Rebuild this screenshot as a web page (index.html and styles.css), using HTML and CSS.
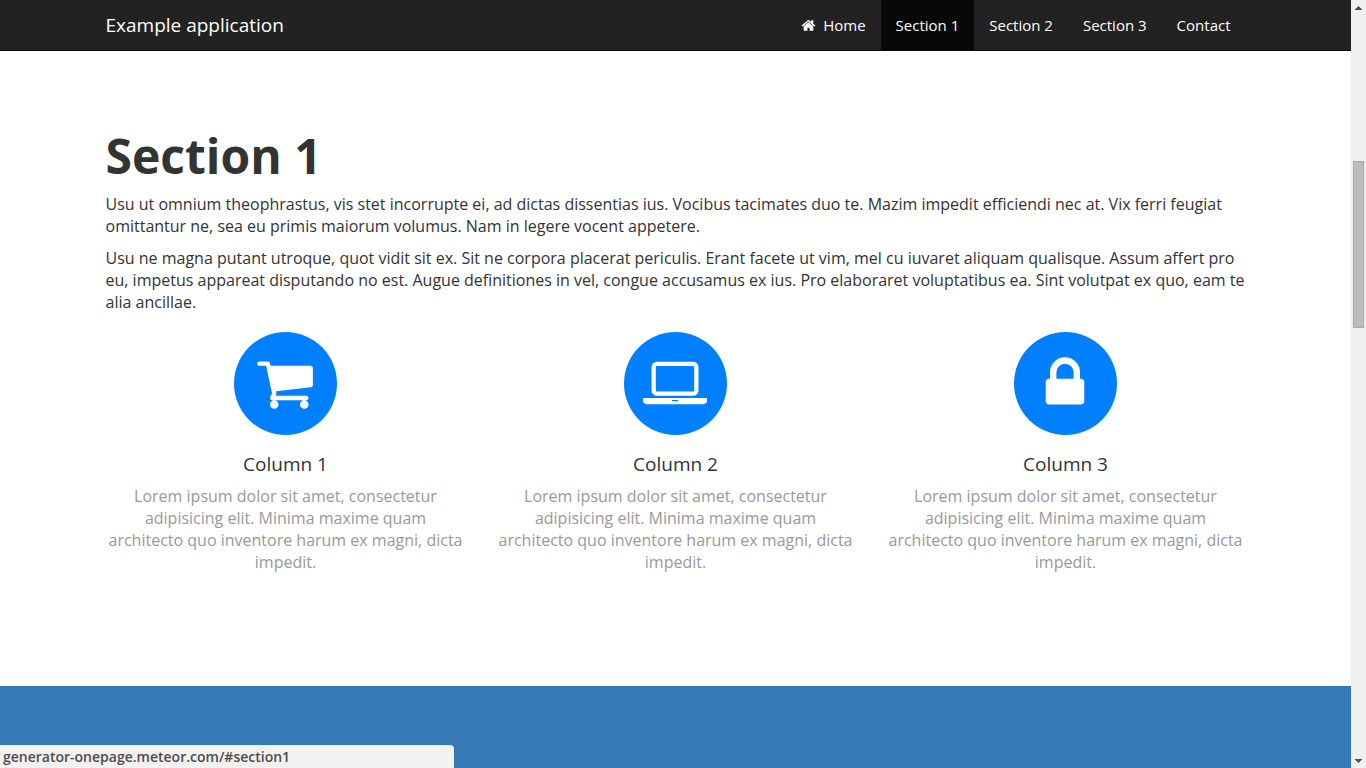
FILE: index.html
```html
<!DOCTYPE html>
<html lang="en">
<head>
<meta charset="utf-8">
<title>Example application</title>
<link rel="stylesheet" href="styles.css">
</head>
<body>
<div class="window">
  <div class="page">
    <header class="navbar">
      <div class="container navbar-inner">
        <a class="brand" href="#home">Example application</a>
        <nav class="nav">
          <a class="nav-link" href="#home"><svg class="nav-icon" viewBox="0 0 1792 1792" aria-hidden="true"><path d="M1472 992v480q0 26-19 45t-45 19h-384v-384h-256v384h-384q-26 0-45-19t-19-45v-480q0-1 .5-3t.5-3l575-474 575 474q1 2 1 6zm223-69l-62 74q-8 9-21 11h-3q-13 0-21-7l-692-577-692 577q-12 8-24 7-13-2-21-11l-62-74q-8-10-7-23.5t11-21.5l719-599q32-26 76-26t76 26l244 204v-195q0-14 9-23t23-9h192q14 0 23 9t9 23v408l219 182q10 8 11 21.5t-7 23.5z"/></svg>Home</a>
          <a class="nav-link active" href="#section1">Section 1</a>
          <a class="nav-link" href="#section2">Section 2</a>
          <a class="nav-link" href="#section3">Section 3</a>
          <a class="nav-link" href="#contact">Contact</a>
        </nav>
      </div>
    </header>
    <main class="main">
      <section class="section" id="section1">
        <div class="container">
          <h1 class="title">Section 1</h1>
          <p class="text">Usu ut omnium theophrastus, vis stet incorrupte ei, ad dictas dissentias ius. Vocibus tacimates duo te. Mazim impedit efficiendi nec at. Vix ferri feugiat omittantur ne, sea eu primis maiorum volumus. Nam in legere vocent appetere.</p>
          <p class="text">Usu ne magna putant utroque, quot vidit sit ex. Sit ne corpora placerat periculis. Erant facete ut vim, mel cu iuvaret aliquam qualisque. Assum affert pro eu, impetus appareat disputando no est. Augue definitiones in vel, congue accusamus ex ius. Pro elaboraret voluptatibus ea. Sint volutpat ex quo, eam te alia ancillae.</p>
          <div class="columns">
            <article class="column">
              <div class="badge"><svg class="badge-icon" viewBox="0 0 1792 1792" aria-hidden="true"><path d="M704 1536q0 52-38 90t-90 38-90-38-38-90 38-90 90-38 90 38 38 90zm896 0q0 52-38 90t-90 38-90-38-38-90 38-90 90-38 90 38 38 90zm128-1088v512q0 24-16.5 42.5t-40.5 21.5l-1044 122q13 60 13 70 0 16-24 64h920q26 0 45 19t19 45-19 45-45 19h-1024q-26 0-45-19t-19-45q0-11 8-31.5t16-36 21.5-40 15.500-29.5l-177-823h-204q-26 0-45-19t-19-45 19-45 45-19h256q16 0 28.500 6.500t19.500 15.500 13 24.500 8 26 5.500 29.500 4.500 26h1201q26 0 45 19t19 45z"/></svg></div>
              <h4 class="column-title">Column 1</h4>
              <p class="column-text">Lorem ipsum dolor sit amet, consectetur adipisicing elit. Minima maxime quam architecto quo inventore harum ex magni, dicta impedit.</p>
            </article>
            <article class="column">
              <div class="badge"><svg class="badge-icon wide" viewBox="0 0 1920 1792" aria-hidden="true"><path d="M416 1280q-66 0-113-47t-47-113v-704q0-66 47-113t113-47h1088q66 0 113 47t47 113v704q0 66-47 113t-113 47h-1088zm-32-864v704q0 13 9.500 22.500t22.500 9.500h1088q13 0 22.500-9.500t9.500-22.500v-704q0-13-9.500-22.500t-22.500-9.500h-1088q-13 0-22.500 9.500t-9.500 22.500zm1376 928h160v96q0 40-47 68t-113 28h-1600q-66 0-113-28t-47-68v-96h1760zm-720 96q16 0 16-16t-16-16h-160q-16 0-16 16t16 16h160z"/></svg></div>
              <h4 class="column-title">Column 2</h4>
              <p class="column-text">Lorem ipsum dolor sit amet, consectetur adipisicing elit. Minima maxime quam architecto quo inventore harum ex magni, dicta impedit.</p>
            </article>
            <article class="column">
              <div class="badge"><svg class="badge-icon" viewBox="0 0 1792 1792" aria-hidden="true"><path d="M640 768h512v-192q0-106-75-181t-181-75-181 75-75 181v192zm832 96v576q0 40-28 68t-68 28h-960q-40 0-68-28t-28-68v-576q0-40 28-68t68-28h32v-192q0-184 132-316t316-132 316 132 132 316v192h32q40 0 68 28t28 68z"/></svg></div>
              <h4 class="column-title">Column 3</h4>
              <p class="column-text">Lorem ipsum dolor sit amet, consectetur adipisicing elit. Minima maxime quam architecto quo inventore harum ex magni, dicta impedit.</p>
            </article>
          </div>
        </div>
      </section>
      <section class="section-blue" id="section2"></section>
    </main>
  </div>
  <div class="scrollbar" aria-hidden="true">
    <svg class="arrow" viewBox="0 0 7 4"><path d="M3 0h1v1h1v1h1v1h1v1H0V3h1V2h1V1h1z"/></svg>
    <div class="track"><div class="thumb"></div></div>
    <svg class="arrow" viewBox="0 0 7 4"><path d="M0 0h7v1H6v1H5v1H4v1H3V3H2V2H1V1H0z"/></svg>
  </div>
  <div class="status">generator-onepage.meteor.com/#section1</div>
</div>
</body>
</html>
```
FILE: styles.css
```css
* { box-sizing: border-box; }

body {
  margin: 0;
  font-family: "Open Sans", "Noto Sans", sans-serif;
  font-size: 16px;
  line-height: 22px;
  color: #333;
  background: #fff;
}

.window {
  display: flex;
  height: 100vh;
  overflow: hidden;
}

.page {
  flex: 1;
  min-width: 0;
  display: flex;
  flex-direction: column;
}

.container {
  width: 100%;
  max-width: 1170px;
  margin: 0 auto;
  padding: 0 15px;
}

.navbar {
  background: #222;
  border-bottom: 1px solid #080808;
}

.navbar-inner {
  display: flex;
  justify-content: space-between;
}

.brand {
  padding: 15px 0;
  font-size: 19px;
  line-height: 20px;
  color: #fff;
  text-decoration: none;
}

.nav { display: flex; }

.nav-link {
  display: flex;
  align-items: center;
  gap: 7px;
  padding: 15px;
  font-size: 15px;
  line-height: 20px;
  color: #fff;
  text-decoration: none;
}

.nav-link.active { background: #080808; }

.nav-icon {
  width: 15px;
  height: 15px;
  fill: currentColor;
}

.main {
  flex: 1;
  display: flex;
  flex-direction: column;
}

.section { padding: 78px 0 113px; }

.title {
  margin: 0 0 11px;
  font-size: 48px;
  line-height: 53px;
  font-weight: 700;
}

.text { margin: 0 0 10px; }

.columns {
  display: grid;
  grid-template-columns: repeat(3, 1fr);
  gap: 30px;
  text-align: center;
}

.badge {
  display: flex;
  align-items: center;
  justify-content: center;
  width: 103px;
  height: 103px;
  margin: 9px auto 18px;
  padding: 0 1px 2px 0;
  border-radius: 50%;
  background: #0080ff;
}

.badge-icon {
  width: 60px;
  height: 60px;
  fill: #fff;
}

.badge-icon.wide { width: 64px; }

.column-title {
  margin: 0 0 10px;
  font-size: 19px;
  line-height: 22px;
  font-weight: 400;
}

.column-text {
  margin: 0;
  padding: 0 2px;
  color: #999;
}

.section-blue {
  flex: 1;
  background: #337ab7;
}

.scrollbar {
  display: flex;
  flex-direction: column;
  align-items: center;
  width: 15px;
  padding: 6px 0 5px;
  background: #f0f0f0;
}

.arrow {
  width: 7px;
  height: 4px;
  fill: #505050;
}

.track {
  flex: 1;
  width: 11px;
  padding-top: 151px;
}

.thumb {
  height: 167px;
  border: 1px solid #a8a8a8;
  background: #bcbcbc;
}

.status {
  position: fixed;
  left: 0;
  bottom: 0;
  width: 454px;
  padding: 1px 3px 0;
  border-top-right-radius: 4px;
  background: #f2f1f0;
  color: #4c4c4c;
  font-size: 14px;
  font-weight: 600;
}
```
